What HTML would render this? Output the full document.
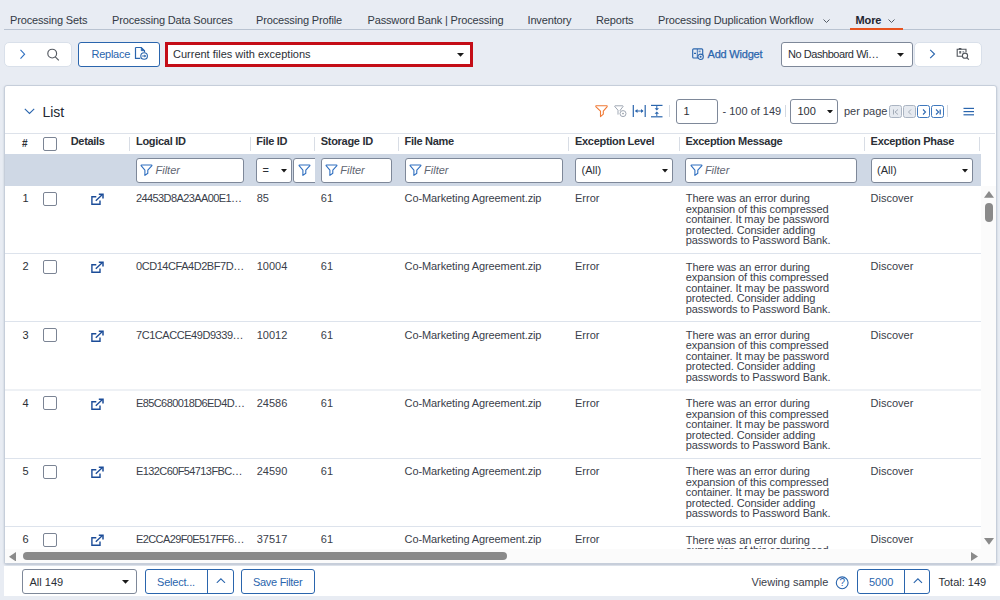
<!DOCTYPE html>
<html><head><meta charset="utf-8"><style>
html,body{margin:0;padding:0}
body{width:1000px;height:600px;overflow:hidden;position:relative;background:#e8ecf3;font-family:"Liberation Sans", sans-serif}
.t{position:absolute;white-space:nowrap}
.b{position:absolute;display:block}
</style></head><body>
<div class="t" style="left:10px;top:14.36px;font-size:11px;line-height:13px;color:#333a45;font-weight:normal;letter-spacing:-0.15px">Processing Sets</div><div class="t" style="left:112px;top:14.36px;font-size:11px;line-height:13px;color:#333a45;font-weight:normal;letter-spacing:-0.15px">Processing Data Sources</div><div class="t" style="left:256px;top:14.36px;font-size:11px;line-height:13px;color:#333a45;font-weight:normal;letter-spacing:-0.15px">Processing Profile</div><div class="t" style="left:367.5px;top:14.36px;font-size:11px;line-height:13px;color:#333a45;font-weight:normal;letter-spacing:-0.15px">Password Bank | Processing</div><div class="t" style="left:527.5px;top:14.36px;font-size:11px;line-height:13px;color:#333a45;font-weight:normal;letter-spacing:-0.15px">Inventory</div><div class="t" style="left:596px;top:14.36px;font-size:11px;line-height:13px;color:#333a45;font-weight:normal;letter-spacing:-0.15px">Reports</div><div class="t" style="left:658px;top:14.36px;font-size:11px;line-height:13px;color:#333a45;font-weight:normal;letter-spacing:-0.15px">Processing Duplication Workflow</div><div class="t" style="left:855.5px;top:14.36px;font-size:11px;line-height:13px;color:#1f2530;font-weight:bold;letter-spacing:-0.1px">More</div><svg class="b" style="left:823px;top:18.5px;" width="7" height="4.5" viewBox="0 0 7 4.5"><polyline points="0.5,0.5 3.5,3.5 6.5,0.5" fill="none" stroke="#555c66" stroke-width="1"/></svg><svg class="b" style="left:888px;top:18.5px;" width="7" height="4.5" viewBox="0 0 7 4.5"><polyline points="0.5,0.5 3.5,3.5 6.5,0.5" fill="none" stroke="#555c66" stroke-width="1"/></svg><div class="b" style="left:4px;top:29px;width:996px;height:1px;background:#b9c3d1"></div><div class="b" style="left:849.5px;top:28px;width:53.0px;height:2px;background:#e8531f"></div><div class="b" style="left:4px;top:42px;width:68px;height:25px;background:#fff;border:1.5px solid #d9e0ea;border-radius:5px;box-sizing:border-box"></div><svg class="b" style="left:19px;top:49px;" width="8" height="11" viewBox="0 0 8 11"><polyline points="1.5,0.8 5.6,5.2 1.5,9.6" fill="none" stroke="#2f6fc0" stroke-width="1.1"/></svg><svg class="b" style="left:46px;top:48px;" width="15" height="14" viewBox="0 0 15 14"><circle cx="6.2" cy="5.6" r="4.4" fill="none" stroke="#555a62" stroke-width="1.15"/><line x1="9.3" y1="8.8" x2="12.8" y2="12.4" stroke="#555a62" stroke-width="1.15"/></svg><div class="b" style="left:78px;top:42px;width:82px;height:25px;background:#fff;border:1px solid #2a65ad;border-radius:3px;box-sizing:border-box"></div><div class="t" style="left:91.5px;top:48.36px;font-size:11px;line-height:13px;color:#2a65ad;font-weight:normal;letter-spacing:-0.25px">Replace</div><svg class="b" style="left:134px;top:46.3px;" width="16" height="14" viewBox="0 0 16 14"><path d="M1.5 1.5 H7.3 L10.5 4.7 V6.3 M6.3 12.3 H1.5 V1.5" fill="none" stroke="#2a65ad" stroke-width="1.2"/><path d="M7.3 1.5 V4.7 H10.5" fill="#2a65ad" stroke="#2a65ad" stroke-width="0.8"/><circle cx="10.1" cy="10" r="3.3" fill="#fff" stroke="#2a65ad" stroke-width="1.1"/><path d="M8.2 10 H11.6" stroke="#2a65ad" stroke-width="1"/><polygon points="12.2,10 10.4,8.5 10.4,11.5" fill="#2a65ad"/></svg><div class="b" style="left:165px;top:42px;width:308px;height:25px;background:#fff;border:3px solid #c40d17;box-sizing:border-box"></div><div class="t" style="left:173px;top:48.36px;font-size:11px;line-height:13px;color:#2b2f36;font-weight:normal;">Current files with exceptions</div><svg class="b" style="left:457px;top:53px;" width="7" height="4" viewBox="0 0 7 4"><polygon points="0,0 7,0 3.5,3.8" fill="#1a1a1a"/></svg><svg class="b" style="left:691px;top:47px;" width="15" height="14" viewBox="0 0 15 14"><rect x="1.7" y="1.8" width="10" height="9.2" fill="none" stroke="#2a65ad" stroke-width="1.15" rx="1"/><line x1="6.3" y1="2" x2="6.3" y2="11" stroke="#2a65ad" stroke-width="0.9"/><line x1="3" y1="6.4" x2="5" y2="6.4" stroke="#2a65ad" stroke-width="1.1"/><rect x="7.6" y="3.6" width="2" height="1.6" fill="#2a65ad" opacity="0.7"/><circle cx="9.6" cy="9.8" r="2.7" fill="#e8ecf3" stroke="#2a65ad" stroke-width="1.05"/><circle cx="9.6" cy="9.8" r="1" fill="#2a65ad"/></svg><div class="t" style="left:707.5px;top:48.16px;font-size:11px;line-height:13px;color:#2a65ad;font-weight:normal;letter-spacing:-0.2px;-webkit-text-stroke:0.25px #2a65ad">Add Widget</div><div class="b" style="left:781px;top:42px;width:132px;height:25px;background:#fff;border:1px solid #7e8899;border-radius:3px;box-sizing:border-box"></div><div class="t" style="left:788px;top:48.16px;font-size:11px;line-height:13px;color:#2b2f36;font-weight:normal;letter-spacing:-0.45px">No Dashboard Wi…</div><svg class="b" style="left:897px;top:53px;" width="7" height="4" viewBox="0 0 7 4"><polygon points="0,0 7,0 3.5,3.8" fill="#1a1a1a"/></svg><div class="b" style="left:914px;top:42px;width:68px;height:25px;background:#fff;border:1.5px solid #d9e0ea;border-radius:5px;box-sizing:border-box"></div><svg class="b" style="left:928.5px;top:49px;" width="8" height="10" viewBox="0 0 8 10"><polyline points="1.2,0.8 5.5,5 1.2,9.2" fill="none" stroke="#2a65ad" stroke-width="1.1"/></svg><svg class="b" style="left:956px;top:47px;" width="14" height="15" viewBox="0 0 14 15"><path d="M6 9.3 H1.2 V2.2 H10 V5.2" fill="none" stroke="#50555c" stroke-width="1.1"/><rect x="2.8" y="1" width="2.6" height="1.6" fill="#50555c"/><rect x="3.2" y="4" width="2" height="2.6" fill="#6a6f76"/><rect x="6.5" y="4" width="1.6" height="1.6" fill="#9aa0a6"/><circle cx="9" cy="8.7" r="2.6" fill="#fff" stroke="#50555c" stroke-width="1.1"/><line x1="10.9" y1="10.6" x2="12.8" y2="12.6" stroke="#50555c" stroke-width="1.2"/></svg><div class="b" style="left:4px;top:85px;width:993px;height:479px;background:#fff;border:1px solid #c6ceda;border-radius:3px;box-sizing:border-box;box-shadow:0 1px 2px rgba(60,80,110,0.25)"></div><svg class="b" style="left:23.5px;top:108px;" width="11" height="7" viewBox="0 0 11 7"><polyline points="0.8,0.8 5.5,5.5 10.2,0.8" fill="none" stroke="#2a65ad" stroke-width="1.1"/></svg><div class="t" style="left:42.4px;top:104.07px;font-size:14px;line-height:17px;color:#222831;font-weight:normal;">List</div><svg class="b" style="left:594px;top:104px;" width="14" height="14" viewBox="0 0 14 14"><path d="M2.2 1.8 H12.8 Q13.6 1.9 13 2.8 L9.3 7.2 V10.2 L6.5 12.6 V7.2 L2 2.8 Q1.4 1.9 2.2 1.8 Z" fill="none" stroke="#f07a36" stroke-width="1.1" stroke-linejoin="round"/></svg><svg class="b" style="left:612.5px;top:104px;" width="15" height="14" viewBox="0 0 15 14"><path d="M2 1.8 H9.8 Q10.4 1.9 10 2.6 L7.2 6.2 V7.2 M5 10.6 V6.2 L1.8 2.6 Q1.4 1.9 2 1.8" fill="none" stroke="#a0a8b4" stroke-width="1" stroke-linejoin="round"/><circle cx="10" cy="9.6" r="3" fill="#fff" stroke="#a0a8b4" stroke-width="1"/><circle cx="10" cy="9.6" r="0.8" fill="#8a939f"/></svg><svg class="b" style="left:631.5px;top:104px;" width="14" height="14" viewBox="0 0 14 14"><line x1="1.3" y1="1" x2="1.3" y2="13" stroke="#2a65ad" stroke-width="1.2"/><line x1="13.2" y1="1" x2="13.2" y2="13" stroke="#2a65ad" stroke-width="1.2"/><line x1="3.5" y1="7" x2="11" y2="7" stroke="#2a65ad" stroke-width="1"/><polygon points="3,7 5.5,5 5.5,9" fill="#2a65ad"/><polygon points="11.5,7 9,5 9,9" fill="#2a65ad"/></svg><svg class="b" style="left:650px;top:104px;" width="14" height="14" viewBox="0 0 14 14"><line x1="1" y1="1.4" x2="12.5" y2="1.4" stroke="#2a65ad" stroke-width="1.2"/><line x1="1" y1="12.8" x2="12.5" y2="12.8" stroke="#2a65ad" stroke-width="1.2"/><line x1="6.8" y1="2" x2="6.8" y2="5" stroke="#2a65ad" stroke-width="1"/><line x1="6.8" y1="9" x2="6.8" y2="12" stroke="#2a65ad" stroke-width="1"/><polygon points="4.6,4.2 9,4.2 6.8,6.4" fill="#2a65ad"/><polygon points="4.6,9.8 9,9.8 6.8,7.6" fill="#2a65ad"/></svg><div class="b" style="left:669px;top:105px;width:1px;height:12px;background:#d3d9e2"></div><div class="b" style="left:676px;top:99px;width:41.5px;height:25px;background:#fff;border:1px solid #7e8899;border-radius:3px;box-sizing:border-box"></div><div class="t" style="left:683.5px;top:105.16px;font-size:11px;line-height:13px;color:#2b2f36;font-weight:normal;">1</div><div class="t" style="left:722.5px;top:105.16px;font-size:11px;line-height:13px;color:#3a404a;font-weight:normal;">- 100 of 149</div><div class="b" style="left:785px;top:105px;width:1px;height:12px;background:#d3d9e2"></div><div class="b" style="left:790px;top:99px;width:48px;height:25px;background:#fff;border:1px solid #7e8899;border-radius:3px;box-sizing:border-box"></div><div class="t" style="left:797.5px;top:105.16px;font-size:11px;line-height:13px;color:#2b2f36;font-weight:normal;">100</div><svg class="b" style="left:826.5px;top:109.8px;" width="6" height="3.5" viewBox="0 0 6 3.5"><polygon points="0,0 6,0 3,3.5" fill="#1a1a1a"/></svg><div class="t" style="left:844px;top:105.16px;font-size:11px;line-height:13px;color:#3a404a;font-weight:normal;">per page</div><div class="b" style="left:889px;top:105px;width:13px;height:13px;background:#e6eaf0;border:1.4px solid #aab4c2;border-radius:2.5px;box-sizing:border-box"></div><svg class="b" style="left:889.5px;top:105.5px;" width="12" height="12" viewBox="0 0 12 12"><line x1="3.5" y1="3.5" x2="3.5" y2="8.5" stroke="#a3acb8" stroke-width="1"/><polyline points="8,3.5 5,6 8,8.5" fill="none" stroke="#a3acb8" stroke-width="1"/></svg><div class="b" style="left:903px;top:105px;width:13px;height:13px;background:#e6eaf0;border:1.4px solid #aab4c2;border-radius:2.5px;box-sizing:border-box"></div><svg class="b" style="left:903.5px;top:105.5px;" width="12" height="12" viewBox="0 0 12 12"><polyline points="7,3.5 4.5,6 7,8.5" fill="none" stroke="#a3acb8" stroke-width="1"/></svg><div class="b" style="left:917px;top:105px;width:13px;height:13px;background:#fff;border:1.4px solid #3f78bd;border-radius:2.5px;box-sizing:border-box"></div><svg class="b" style="left:917.5px;top:105.5px;" width="12" height="12" viewBox="0 0 12 12"><polyline points="5,3.5 7.5,6 5,8.5" fill="none" stroke="#2f6ab3" stroke-width="1.1"/></svg><div class="b" style="left:931px;top:105px;width:13px;height:13px;background:#fff;border:1.4px solid #3f78bd;border-radius:2.5px;box-sizing:border-box"></div><svg class="b" style="left:931.5px;top:105.5px;" width="12" height="12" viewBox="0 0 12 12"><line x1="8.2" y1="3.5" x2="8.2" y2="8.5" stroke="#2f6ab3" stroke-width="1.3"/><polyline points="4,3.5 6.6,6 4,8.5" fill="none" stroke="#2f6ab3" stroke-width="1.1"/></svg><div class="b" style="left:947px;top:105px;width:1px;height:12px;background:#d3d9e2"></div><svg class="b" style="left:963px;top:107px;" width="12" height="9" viewBox="0 0 12 9"><line x1="0.5" y1="1.4" x2="11" y2="1.4" stroke="#2a65ad" stroke-width="1.2"/><line x1="0.5" y1="4.6" x2="11" y2="4.6" stroke="#2a65ad" stroke-width="1.2"/><line x1="0.5" y1="7.8" x2="11" y2="7.8" stroke="#2a65ad" stroke-width="1.2"/></svg><div class="b" style="left:5px;top:133px;width:990px;height:1px;background:#dde2ea"></div><div class="t" style="left:22px;top:138.19px;font-size:10px;line-height:12px;color:#2b2f36;font-weight:bold;">#</div><div class="b" style="left:43px;top:137px;width:14px;height:14px;background:#fff;border:1px solid #7b8494;border-radius:2px;box-sizing:border-box"></div><div class="t" style="left:70.7px;top:134.96px;font-size:11px;line-height:13px;color:#2b2f36;font-weight:bold;letter-spacing:-0.3px">Details</div><div class="b" style="left:129px;top:137px;width:1px;height:14px;background:#d8dde5"></div><div class="b" style="left:250px;top:137px;width:1px;height:14px;background:#d8dde5"></div><div class="b" style="left:314px;top:137px;width:1px;height:14px;background:#d8dde5"></div><div class="b" style="left:398px;top:137px;width:1px;height:14px;background:#d8dde5"></div><div class="b" style="left:568px;top:137px;width:1px;height:14px;background:#d8dde5"></div><div class="b" style="left:679px;top:137px;width:1px;height:14px;background:#d8dde5"></div><div class="b" style="left:864px;top:137px;width:1px;height:14px;background:#d8dde5"></div><div class="b" style="left:979px;top:137px;width:1px;height:14px;background:#d8dde5"></div><div class="t" style="left:136px;top:134.96px;font-size:11px;line-height:13px;color:#2b2f36;font-weight:bold;letter-spacing:-0.3px">Logical ID</div><div class="t" style="left:256.3px;top:134.96px;font-size:11px;line-height:13px;color:#2b2f36;font-weight:bold;letter-spacing:-0.3px">File ID</div><div class="t" style="left:320.8px;top:134.96px;font-size:11px;line-height:13px;color:#2b2f36;font-weight:bold;letter-spacing:-0.3px">Storage ID</div><div class="t" style="left:404.6px;top:134.96px;font-size:11px;line-height:13px;color:#2b2f36;font-weight:bold;letter-spacing:-0.3px">File Name</div><div class="t" style="left:575px;top:134.96px;font-size:11px;line-height:13px;color:#2b2f36;font-weight:bold;letter-spacing:-0.3px">Exception Level</div><div class="t" style="left:685.4px;top:134.96px;font-size:11px;line-height:13px;color:#2b2f36;font-weight:bold;letter-spacing:-0.3px">Exception Message</div><div class="t" style="left:870.6px;top:134.96px;font-size:11px;line-height:13px;color:#2b2f36;font-weight:bold;letter-spacing:-0.3px">Exception Phase</div><div class="b" style="left:5px;top:154px;width:976px;height:32px;background:#cfd8e5"></div><div class="b" style="left:136px;top:158px;width:108px;height:25px;background:#fff;border:1px solid #7e8899;border-radius:3px;box-sizing:border-box"></div><svg class="b" style="left:140.3px;top:163.8px;" width="13" height="12.5" viewBox="0 0 13 12.5"><path d="M1.6 1 H11.4 Q12.3 1.1 11.7 1.9 L7.8 6.2 V9.2 L4.9 11.4 V6.2 L1.3 1.9 Q0.7 1.1 1.6 1 Z" fill="none" stroke="#2f6fc0" stroke-width="1.1" stroke-linejoin="round"/></svg><div class="t" style="left:155.5px;top:163.96px;font-size:11px;line-height:13px;color:#5f6672;font-weight:normal;font-style:italic">Filter</div><div class="b" style="left:256px;top:158px;width:35.5px;height:25px;background:#fff;border:1px solid #7e8899;border-radius:3px;box-sizing:border-box"></div><div class="t" style="left:262.5px;top:163.96px;font-size:11px;line-height:13px;color:#2b2f36;font-weight:normal;">=</div><svg class="b" style="left:280.5px;top:169px;" width="6" height="3.5" viewBox="0 0 6 3.5"><polygon points="0,0 6,0 3,3.5" fill="#1a1a1a"/></svg><div class="b" style="left:293px;top:158px;width:26px;height:25px;background:#fff;border:1px solid #7e8899;border-radius:3px;box-sizing:border-box"></div><svg class="b" style="left:297.8px;top:163.8px;" width="13" height="12.5" viewBox="0 0 13 12.5"><path d="M1.6 1 H11.4 Q12.3 1.1 11.7 1.9 L7.8 6.2 V9.2 L4.9 11.4 V6.2 L1.3 1.9 Q0.7 1.1 1.6 1 Z" fill="none" stroke="#2f6fc0" stroke-width="1.1" stroke-linejoin="round"/></svg><div class="b" style="left:314.6px;top:154px;width:6.199999999999989px;height:32px;background:#cfd8e5"></div><div class="b" style="left:320.8px;top:158px;width:71.19999999999999px;height:25px;background:#fff;border:1px solid #7e8899;border-radius:3px;box-sizing:border-box"></div><svg class="b" style="left:325.1px;top:163.8px;" width="13" height="12.5" viewBox="0 0 13 12.5"><path d="M1.6 1 H11.4 Q12.3 1.1 11.7 1.9 L7.8 6.2 V9.2 L4.9 11.4 V6.2 L1.3 1.9 Q0.7 1.1 1.6 1 Z" fill="none" stroke="#2f6fc0" stroke-width="1.1" stroke-linejoin="round"/></svg><div class="t" style="left:340.3px;top:163.96px;font-size:11px;line-height:13px;color:#5f6672;font-weight:normal;font-style:italic">Filter</div><div class="b" style="left:404.6px;top:158px;width:158.10000000000002px;height:25px;background:#fff;border:1px solid #7e8899;border-radius:3px;box-sizing:border-box"></div><svg class="b" style="left:408.90000000000003px;top:163.8px;" width="13" height="12.5" viewBox="0 0 13 12.5"><path d="M1.6 1 H11.4 Q12.3 1.1 11.7 1.9 L7.8 6.2 V9.2 L4.9 11.4 V6.2 L1.3 1.9 Q0.7 1.1 1.6 1 Z" fill="none" stroke="#2f6fc0" stroke-width="1.1" stroke-linejoin="round"/></svg><div class="t" style="left:424.1px;top:163.96px;font-size:11px;line-height:13px;color:#5f6672;font-weight:normal;font-style:italic">Filter</div><div class="b" style="left:575px;top:158px;width:97.60000000000002px;height:25px;background:#fff;border:1px solid #7e8899;border-radius:3px;box-sizing:border-box"></div><div class="t" style="left:581.5px;top:163.96px;font-size:11px;line-height:13px;color:#2b2f36;font-weight:normal;">(All)</div><svg class="b" style="left:661.6px;top:169px;" width="6" height="3.5" viewBox="0 0 6 3.5"><polygon points="0,0 6,0 3,3.5" fill="#1a1a1a"/></svg><div class="b" style="left:685.4px;top:158px;width:172.0px;height:25px;background:#fff;border:1px solid #7e8899;border-radius:3px;box-sizing:border-box"></div><svg class="b" style="left:689.6999999999999px;top:163.8px;" width="13" height="12.5" viewBox="0 0 13 12.5"><path d="M1.6 1 H11.4 Q12.3 1.1 11.7 1.9 L7.8 6.2 V9.2 L4.9 11.4 V6.2 L1.3 1.9 Q0.7 1.1 1.6 1 Z" fill="none" stroke="#2f6fc0" stroke-width="1.1" stroke-linejoin="round"/></svg><div class="t" style="left:704.9px;top:163.96px;font-size:11px;line-height:13px;color:#5f6672;font-weight:normal;font-style:italic">Filter</div><div class="b" style="left:870.6px;top:158px;width:102.10000000000002px;height:25px;background:#fff;border:1px solid #7e8899;border-radius:3px;box-sizing:border-box"></div><div class="t" style="left:877.1px;top:163.96px;font-size:11px;line-height:13px;color:#2b2f36;font-weight:normal;">(All)</div><svg class="b" style="left:961.7px;top:169px;" width="6" height="3.5" viewBox="0 0 6 3.5"><polygon points="0,0 6,0 3,3.5" fill="#1a1a1a"/></svg><div class="b" style="left:5px;top:186px;width:976px;height:363px;overflow:hidden"><div class="t" style="left:17.5px;top:6.16px;font-size:11px;line-height:13px;color:#2b2f36;font-weight:normal;">1</div><div class="b" style="left:38px;top:6px;width:14px;height:14px;background:#fff;border:1px solid #7b8494;border-radius:2px;box-sizing:border-box"></div><svg class="b" style="left:85px;top:7px;" width="15" height="13" viewBox="0 0 15 13"><path d="M6.3 3.7 H1.9 V11.2 H10 V7.4" fill="none" stroke="#1b4c98" stroke-width="1.4"/><path d="M5.8 7.8 L12.4 1.6" stroke="#1b4c98" stroke-width="1.4"/><path d="M8.8 1.2 H13 V5.5" fill="none" stroke="#1b4c98" stroke-width="1.5"/></svg><div class="t" style="left:131px;top:6.16px;font-size:11px;line-height:13px;color:#3a404a;font-weight:normal;letter-spacing:-0.6px">24453D8A23AA00E1…</div><div class="t" style="left:251.7px;top:6.16px;font-size:11px;line-height:13px;color:#3a404a;font-weight:normal;">85</div><div class="t" style="left:315.8px;top:6.16px;font-size:11px;line-height:13px;color:#3a404a;font-weight:normal;">61</div><div class="t" style="left:399.6px;top:6.16px;font-size:11px;line-height:13px;color:#3a404a;font-weight:normal;letter-spacing:-0.1px">Co-Marketing Agreement.zip</div><div class="t" style="left:570px;top:6.16px;font-size:11px;line-height:13px;color:#3a404a;font-weight:normal;">Error</div><div class="t" style="left:680.8px;top:7.41px;font-size:11px;line-height:10.5px;color:#3a404a;letter-spacing:-0.1px">There was an error during<br>expansion of this compressed<br>container. It may be password<br>protected. Consider adding<br>passwords to Password Bank.</div><div class="t" style="left:865.6px;top:6.16px;font-size:11px;line-height:13px;color:#3a404a;font-weight:normal;">Discover</div><svg class="b" style="left:0px;top:0px;" width="976" height="363" viewBox="0 0 976 363"><rect x="0" y="67" width="976" height="1" fill="#dde3ec"/></svg><div class="t" style="left:17.5px;top:74.41px;font-size:11px;line-height:13px;color:#2b2f36;font-weight:normal;">2</div><div class="b" style="left:38px;top:74px;width:14px;height:14px;background:#fff;border:1px solid #7b8494;border-radius:2px;box-sizing:border-box"></div><svg class="b" style="left:85px;top:75px;" width="15" height="13" viewBox="0 0 15 13"><path d="M6.3 3.7 H1.9 V11.2 H10 V7.4" fill="none" stroke="#1b4c98" stroke-width="1.4"/><path d="M5.8 7.8 L12.4 1.6" stroke="#1b4c98" stroke-width="1.4"/><path d="M8.8 1.2 H13 V5.5" fill="none" stroke="#1b4c98" stroke-width="1.5"/></svg><div class="t" style="left:131px;top:74.41px;font-size:11px;line-height:13px;color:#3a404a;font-weight:normal;letter-spacing:-0.45px">0CD14CFA4D2BF7D…</div><div class="t" style="left:251.7px;top:74.41px;font-size:11px;line-height:13px;color:#3a404a;font-weight:normal;">10004</div><div class="t" style="left:315.8px;top:74.41px;font-size:11px;line-height:13px;color:#3a404a;font-weight:normal;">61</div><div class="t" style="left:399.6px;top:74.41px;font-size:11px;line-height:13px;color:#3a404a;font-weight:normal;letter-spacing:-0.1px">Co-Marketing Agreement.zip</div><div class="t" style="left:570px;top:74.41px;font-size:11px;line-height:13px;color:#3a404a;font-weight:normal;">Error</div><div class="t" style="left:680.8px;top:75.66px;font-size:11px;line-height:10.5px;color:#3a404a;letter-spacing:-0.1px">There was an error during<br>expansion of this compressed<br>container. It may be password<br>protected. Consider adding<br>passwords to Password Bank.</div><div class="t" style="left:865.6px;top:74.41px;font-size:11px;line-height:13px;color:#3a404a;font-weight:normal;">Discover</div><svg class="b" style="left:0px;top:0px;" width="976" height="363" viewBox="0 0 976 363"><rect x="0" y="135" width="976" height="1" fill="#dde3ec"/></svg><div class="t" style="left:17.5px;top:142.66px;font-size:11px;line-height:13px;color:#2b2f36;font-weight:normal;">3</div><div class="b" style="left:38px;top:142px;width:14px;height:14px;background:#fff;border:1px solid #7b8494;border-radius:2px;box-sizing:border-box"></div><svg class="b" style="left:85px;top:144px;" width="15" height="13" viewBox="0 0 15 13"><path d="M6.3 3.7 H1.9 V11.2 H10 V7.4" fill="none" stroke="#1b4c98" stroke-width="1.4"/><path d="M5.8 7.8 L12.4 1.6" stroke="#1b4c98" stroke-width="1.4"/><path d="M8.8 1.2 H13 V5.5" fill="none" stroke="#1b4c98" stroke-width="1.5"/></svg><div class="t" style="left:131px;top:142.66px;font-size:11px;line-height:13px;color:#3a404a;font-weight:normal;letter-spacing:-0.45px">7C1CACCE49D9339…</div><div class="t" style="left:251.7px;top:142.66px;font-size:11px;line-height:13px;color:#3a404a;font-weight:normal;">10012</div><div class="t" style="left:315.8px;top:142.66px;font-size:11px;line-height:13px;color:#3a404a;font-weight:normal;">61</div><div class="t" style="left:399.6px;top:142.66px;font-size:11px;line-height:13px;color:#3a404a;font-weight:normal;letter-spacing:-0.1px">Co-Marketing Agreement.zip</div><div class="t" style="left:570px;top:142.66px;font-size:11px;line-height:13px;color:#3a404a;font-weight:normal;">Error</div><div class="t" style="left:680.8px;top:143.91px;font-size:11px;line-height:10.5px;color:#3a404a;letter-spacing:-0.1px">There was an error during<br>expansion of this compressed<br>container. It may be password<br>protected. Consider adding<br>passwords to Password Bank.</div><div class="t" style="left:865.6px;top:142.66px;font-size:11px;line-height:13px;color:#3a404a;font-weight:normal;">Discover</div><svg class="b" style="left:0px;top:0px;" width="976" height="363" viewBox="0 0 976 363"><rect x="0" y="203.5" width="976" height="1" fill="#dde3ec"/></svg><div class="t" style="left:17.5px;top:210.91px;font-size:11px;line-height:13px;color:#2b2f36;font-weight:normal;">4</div><div class="b" style="left:38px;top:210px;width:14px;height:14px;background:#fff;border:1px solid #7b8494;border-radius:2px;box-sizing:border-box"></div><svg class="b" style="left:85px;top:212px;" width="15" height="13" viewBox="0 0 15 13"><path d="M6.3 3.7 H1.9 V11.2 H10 V7.4" fill="none" stroke="#1b4c98" stroke-width="1.4"/><path d="M5.8 7.8 L12.4 1.6" stroke="#1b4c98" stroke-width="1.4"/><path d="M8.8 1.2 H13 V5.5" fill="none" stroke="#1b4c98" stroke-width="1.5"/></svg><div class="t" style="left:131px;top:210.91px;font-size:11px;line-height:13px;color:#3a404a;font-weight:normal;letter-spacing:-0.6px">E85C680018D6ED4D…</div><div class="t" style="left:251.7px;top:210.91px;font-size:11px;line-height:13px;color:#3a404a;font-weight:normal;">24586</div><div class="t" style="left:315.8px;top:210.91px;font-size:11px;line-height:13px;color:#3a404a;font-weight:normal;">61</div><div class="t" style="left:399.6px;top:210.91px;font-size:11px;line-height:13px;color:#3a404a;font-weight:normal;letter-spacing:-0.1px">Co-Marketing Agreement.zip</div><div class="t" style="left:570px;top:210.91px;font-size:11px;line-height:13px;color:#3a404a;font-weight:normal;">Error</div><div class="t" style="left:680.8px;top:212.16px;font-size:11px;line-height:10.5px;color:#3a404a;letter-spacing:-0.1px">There was an error during<br>expansion of this compressed<br>container. It may be password<br>protected. Consider adding<br>passwords to Password Bank.</div><div class="t" style="left:865.6px;top:210.91px;font-size:11px;line-height:13px;color:#3a404a;font-weight:normal;">Discover</div><svg class="b" style="left:0px;top:0px;" width="976" height="363" viewBox="0 0 976 363"><rect x="0" y="272" width="976" height="1" fill="#dde3ec"/></svg><div class="t" style="left:17.5px;top:279.16px;font-size:11px;line-height:13px;color:#2b2f36;font-weight:normal;">5</div><div class="b" style="left:38px;top:279px;width:14px;height:14px;background:#fff;border:1px solid #7b8494;border-radius:2px;box-sizing:border-box"></div><svg class="b" style="left:85px;top:280px;" width="15" height="13" viewBox="0 0 15 13"><path d="M6.3 3.7 H1.9 V11.2 H10 V7.4" fill="none" stroke="#1b4c98" stroke-width="1.4"/><path d="M5.8 7.8 L12.4 1.6" stroke="#1b4c98" stroke-width="1.4"/><path d="M8.8 1.2 H13 V5.5" fill="none" stroke="#1b4c98" stroke-width="1.5"/></svg><div class="t" style="left:131px;top:279.16px;font-size:11px;line-height:13px;color:#3a404a;font-weight:normal;letter-spacing:-0.6px">E132C60F54713FBC…</div><div class="t" style="left:251.7px;top:279.16px;font-size:11px;line-height:13px;color:#3a404a;font-weight:normal;">24590</div><div class="t" style="left:315.8px;top:279.16px;font-size:11px;line-height:13px;color:#3a404a;font-weight:normal;">61</div><div class="t" style="left:399.6px;top:279.16px;font-size:11px;line-height:13px;color:#3a404a;font-weight:normal;letter-spacing:-0.1px">Co-Marketing Agreement.zip</div><div class="t" style="left:570px;top:279.16px;font-size:11px;line-height:13px;color:#3a404a;font-weight:normal;">Error</div><div class="t" style="left:680.8px;top:280.41px;font-size:11px;line-height:10.5px;color:#3a404a;letter-spacing:-0.1px">There was an error during<br>expansion of this compressed<br>container. It may be password<br>protected. Consider adding<br>passwords to Password Bank.</div><div class="t" style="left:865.6px;top:279.16px;font-size:11px;line-height:13px;color:#3a404a;font-weight:normal;">Discover</div><svg class="b" style="left:0px;top:0px;" width="976" height="363" viewBox="0 0 976 363"><rect x="0" y="340" width="976" height="1" fill="#dde3ec"/></svg><div class="t" style="left:17.5px;top:347.41px;font-size:11px;line-height:13px;color:#2b2f36;font-weight:normal;">6</div><div class="b" style="left:38px;top:347px;width:14px;height:14px;background:#fff;border:1px solid #7b8494;border-radius:2px;box-sizing:border-box"></div><svg class="b" style="left:85px;top:348px;" width="15" height="13" viewBox="0 0 15 13"><path d="M6.3 3.7 H1.9 V11.2 H10 V7.4" fill="none" stroke="#1b4c98" stroke-width="1.4"/><path d="M5.8 7.8 L12.4 1.6" stroke="#1b4c98" stroke-width="1.4"/><path d="M8.8 1.2 H13 V5.5" fill="none" stroke="#1b4c98" stroke-width="1.5"/></svg><div class="t" style="left:131px;top:347.41px;font-size:11px;line-height:13px;color:#3a404a;font-weight:normal;letter-spacing:-0.6px">E2CCA29F0E517FF6…</div><div class="t" style="left:251.7px;top:347.41px;font-size:11px;line-height:13px;color:#3a404a;font-weight:normal;">37517</div><div class="t" style="left:315.8px;top:347.41px;font-size:11px;line-height:13px;color:#3a404a;font-weight:normal;">61</div><div class="t" style="left:399.6px;top:347.41px;font-size:11px;line-height:13px;color:#3a404a;font-weight:normal;letter-spacing:-0.1px">Co-Marketing Agreement.zip</div><div class="t" style="left:570px;top:347.41px;font-size:11px;line-height:13px;color:#3a404a;font-weight:normal;">Error</div><div class="t" style="left:680.8px;top:348.66px;font-size:11px;line-height:10.5px;color:#3a404a;letter-spacing:-0.1px">There was an error during<br>expansion of this compressed<br>container. It may be password<br>protected. Consider adding<br>passwords to Password Bank.</div><div class="t" style="left:865.6px;top:347.41px;font-size:11px;line-height:13px;color:#3a404a;font-weight:normal;">Discover</div></div><div class="b" style="left:981px;top:186px;width:15px;height:377px;background:#fbfbfb"></div><svg class="b" style="left:984px;top:190.5px;" width="10" height="7" viewBox="0 0 10 7"><polygon points="0,6.8 10,6.8 5,0" fill="#8a8a8a"/></svg><div class="b" style="left:984.5px;top:203px;width:8.5px;height:19px;background:#8a8a8a;border-radius:4px"></div><svg class="b" style="left:984px;top:537.5px;" width="10" height="7" viewBox="0 0 10 7"><polygon points="0,0 10,0 5,6.8" fill="#8a8a8a"/></svg><div class="b" style="left:5px;top:549px;width:976px;height:14px;background:#fbfbfb"></div><svg class="b" style="left:9px;top:551.5px;" width="7" height="9.5" viewBox="0 0 7 9.5"><polygon points="7,0 7,9.5 0,4.75" fill="#8a8a8a"/></svg><div class="b" style="left:22.5px;top:552px;width:484.5px;height:8px;background:#8a8a8a;border-radius:4px"></div><svg class="b" style="left:970.5px;top:551.5px;" width="7" height="9" viewBox="0 0 7 9"><polygon points="0,0 0,9 7,4.5" fill="#8a8a8a"/></svg><div class="b" style="left:4px;top:566px;width:996px;height:30px;background:#fff"></div><div class="b" style="left:22px;top:569px;width:115px;height:25px;background:#fff;border:1px solid #7e8899;border-radius:3px;box-sizing:border-box"></div><div class="t" style="left:29.5px;top:575.56px;font-size:11px;line-height:13px;color:#2b2f36;font-weight:normal;">All 149</div><svg class="b" style="left:121.5px;top:580px;" width="7" height="4" viewBox="0 0 7 4"><polygon points="0,0 7,0 3.5,3.8" fill="#1a1a1a"/></svg><div class="b" style="left:145px;top:569px;width:88.5px;height:25px;background:#fff;border:1px solid #2a65ad;border-radius:3px;box-sizing:border-box"></div><div class="b" style="left:207px;top:569px;width:1px;height:25px;background:#2a65ad"></div><div class="t" style="left:157px;top:575.56px;font-size:11px;line-height:13px;color:#2a65ad;font-weight:normal;letter-spacing:-0.2px">Select...</div><svg class="b" style="left:216px;top:577.5px;" width="10" height="5.5" viewBox="0 0 10 5.5"><polyline points="0.8,4.8 4.9,0.8 9,4.8" fill="none" stroke="#2a65ad" stroke-width="1.1"/></svg><div class="b" style="left:241px;top:569px;width:73.5px;height:25px;background:#fff;border:1px solid #2a65ad;border-radius:3px;box-sizing:border-box"></div><div class="t" style="left:253px;top:575.56px;font-size:11px;line-height:13px;color:#2a65ad;font-weight:normal;letter-spacing:-0.3px">Save Filter</div><div class="t" style="left:751.5px;top:575.56px;font-size:11px;line-height:13px;color:#3a404a;font-weight:normal;">Viewing sample</div><svg class="b" style="left:835px;top:575.5px;" width="14" height="14" viewBox="0 0 14 14"><circle cx="7.2" cy="6.8" r="5.9" fill="none" stroke="#2a65ad" stroke-width="1.1"/><text x="7.2" y="10.3" text-anchor="middle" font-family="Liberation Sans" font-size="10" fill="#2a65ad">?</text></svg><div class="b" style="left:856.5px;top:569px;width:73.5px;height:25px;background:#fff;border:1px solid #2a65ad;border-radius:3px;box-sizing:border-box"></div><div class="b" style="left:904px;top:569px;width:1px;height:25px;background:#2a65ad"></div><div class="t" style="left:869px;top:575.56px;font-size:11px;line-height:13px;color:#2a65ad;font-weight:normal;">5000</div><svg class="b" style="left:912.5px;top:578px;" width="10" height="5.5" viewBox="0 0 10 5.5"><polyline points="0.8,4.8 4.9,0.8 9,4.8" fill="none" stroke="#2a65ad" stroke-width="1.1"/></svg><div class="t" style="left:938.5px;top:575.56px;font-size:11px;line-height:13px;color:#2b2f36;font-weight:normal;">Total: 149</div>
</body></html>
